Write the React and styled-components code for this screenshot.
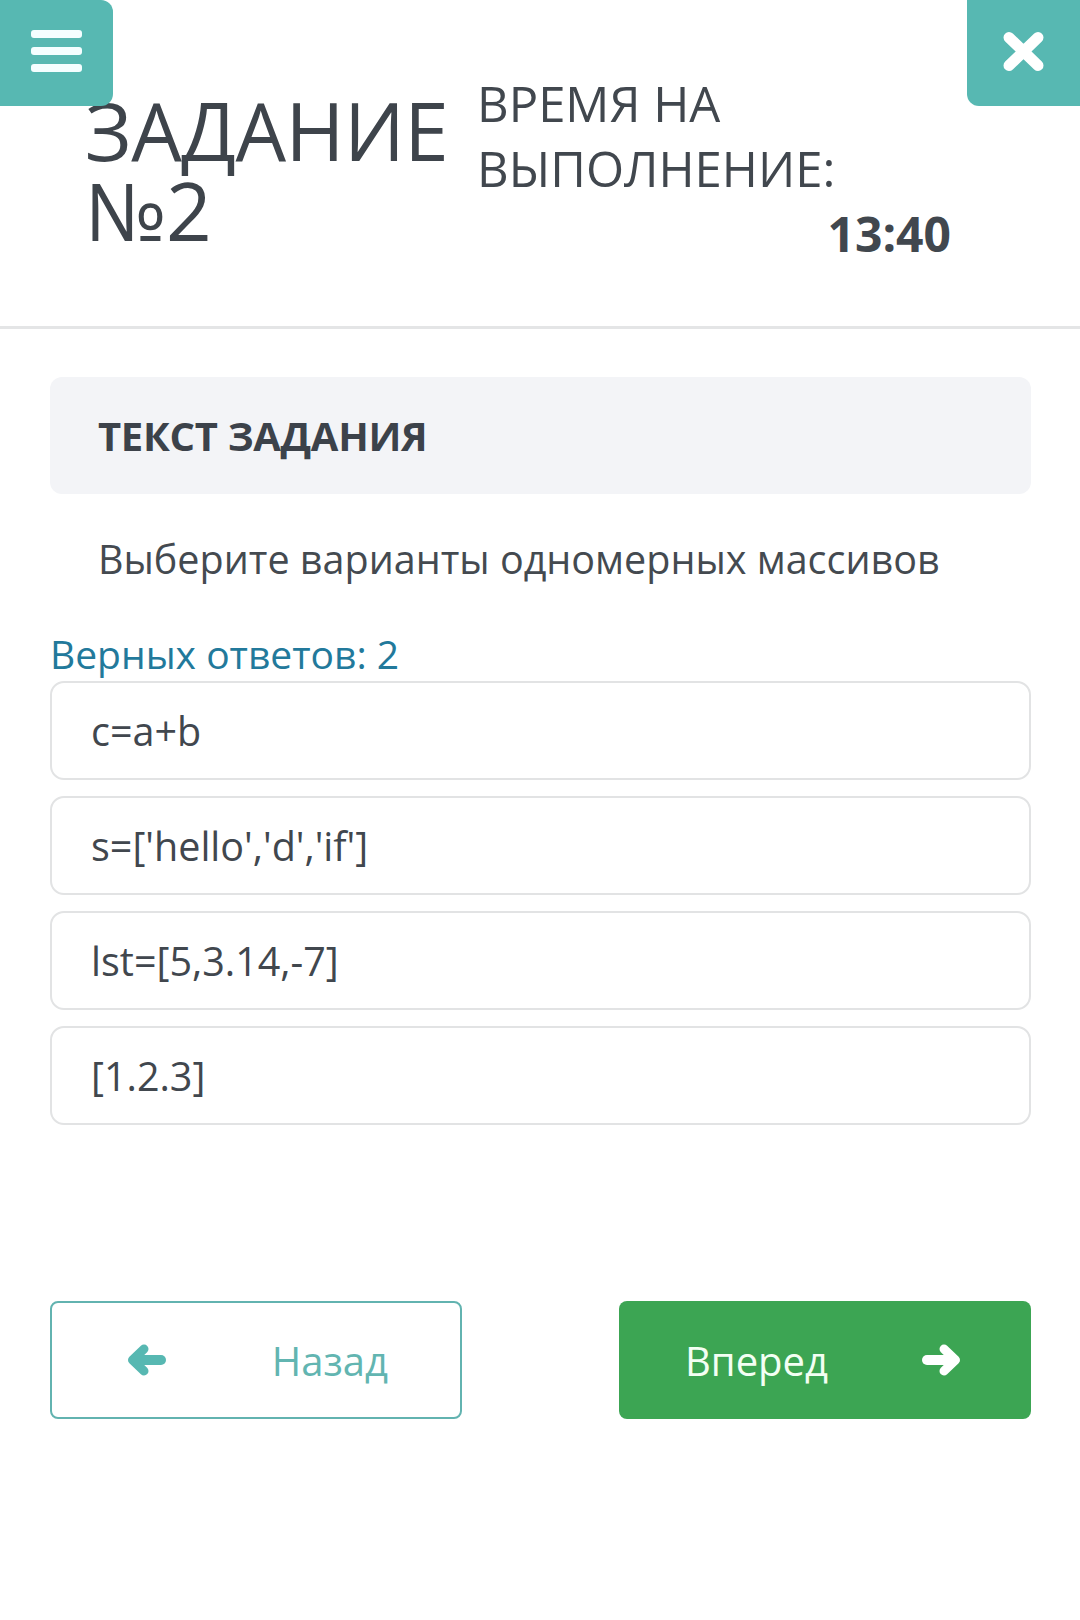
import React from "react";
import styled, { createGlobalStyle } from "styled-components";

const GlobalStyle = createGlobalStyle`
  html, body {
    margin: 0;
    padding: 0;
    background: #ffffff;
    font-family: "Open Sans", "Noto Sans", sans-serif;
  }
  * { box-sizing: border-box; }
`;

const TEAL = "#57b8b2";

const Page = styled.div`
  position: relative;
  width: 1080px;
  min-height: 1620px;
  background: #fff;
  color: #41474e;
`;

const CornerButton = styled.div`
  position: absolute;
  top: 0;
  ${(p) => (p.$side === "left" ? "left: 0;" : "right: 0;")}
  width: 113px;
  height: 106px;
  background: ${TEAL};
  border-radius: ${(p) => (p.$side === "left" ? "0 12px 12px 0" : "0 0 0 12px")};
  display: flex;
  align-items: center;
  justify-content: center;
  z-index: 2;
`;

const Bars = styled.div`
  display: flex;
  flex-direction: column;
  gap: 9px;
  margin-top: -5px;
  margin-left: 0;
`;

const Bar = styled.span`
  display: block;
  width: 51px;
  height: 8px;
  border-radius: 3px;
  background: #f4feff;
`;

const Header = styled.header`
  display: flex;
  align-items: flex-start;
  height: 329px;
  padding: 71px 0 0 85px;
  border-bottom: 3px solid #e4e5e6;
`;

const Title = styled.h1`
  margin: 19px 0 0;
  width: 392px;
  font-size: 80px;
  line-height: 80px;
  font-weight: 400;
  color: #3e444b;
  letter-spacing: -0.5px;
`;

const Timer = styled.div`
  width: 474px;
  font-size: 49px;
  line-height: 65px;
  color: #41474e;
`;

const TimerLine = styled.div`
  text-align: ${(p) => (p.$right ? "right" : "left")};
  font-weight: ${(p) => (p.$bold ? 700 : 400)};
  font-size: ${(p) => (p.$bold ? "48px" : "49px")};
`;

const Main = styled.main`
  padding: 48px 49px 0 50px;
`;

const TaskHeading = styled.div`
  height: 117px;
  background: #f3f4f7;
  border-radius: 12px;
  display: flex;
  align-items: center;
  padding-left: 48px;
  font-size: 40px;
  font-weight: 700;
  color: #3c424a;
  letter-spacing: -0.3px;
`;

const Question = styled.p`
  margin: 38px 0 0;
  padding-left: 48px;
  font-size: 39.5px;
  line-height: 54px;
  color: #444a50;
`;

const CorrectCount = styled.div`
  margin-top: 41px;
  font-size: 39px;
  line-height: 54px;
  color: #22799b;
`;

const AnswerList = styled.div`
  margin-top: 0;
  display: flex;
  flex-direction: column;
  gap: 16px;
`;

const Answer = styled.div`
  height: 99px;
  border: 2px solid #e2e3e4;
  border-radius: 14px;
  display: flex;
  align-items: center;
  padding-left: 39px;
  font-size: 39.5px;
  color: #41474e;
`;

const ButtonRow = styled.div`
  margin-top: 176px;
  display: flex;
  justify-content: space-between;
`;

const NavButton = styled.div`
  width: 412px;
  height: 118px;
  border-radius: 8px;
  display: flex;
  align-items: center;
  justify-content: space-between;
  padding: ${(p) => (p.$primary ? "0 70px 0 66px" : "0 72px 0 75px")};
  font-size: 40px;
  ${(p) =>
    p.$primary
      ? `background: #3ca553; color: #f3fff3; border: none;`
      : `background: #fff; color: #62b5b1; border: 2px solid #62b3b0;`}
`;

const Arrow = ({ dir, color }) => (
  <svg
    width="39"
    height="32"
    viewBox="0 0 39 32"
    style={{ transform: dir === "right" ? "scaleX(-1)" : "none", flexShrink: 0 }}
  >
    <path
      d="M17 5 L5.5 16 L17 27"
      fill="none"
      stroke={color}
      strokeWidth="9"
      strokeLinecap="round"
      strokeLinejoin="round"
    />
    <path d="M9 16 H34" stroke={color} strokeWidth="10" strokeLinecap="round" />
  </svg>
);

const CloseIcon = () => (
  <svg width="43" height="41" viewBox="0 0 43 41" style={{ marginTop: -3 }}>
    <path
      d="M7 6.5 L36 34.5 M36 6.5 L7 34.5"
      stroke="#ffffff"
      strokeWidth="11"
      strokeLinecap="round"
    />
  </svg>
);

const answers = ["c=a+b", "s=['hello','d','if']", "lst=[5,3.14,-7]", "[1.2.3]"];

export default function App() {
  return (
    <>
      <GlobalStyle />
      <Page>
        <CornerButton $side="left">
          <Bars>
            <Bar />
            <Bar />
            <Bar />
          </Bars>
        </CornerButton>
        <CornerButton $side="right">
          <CloseIcon />
        </CornerButton>

        <Header>
          <Title>
            ЗАДАНИЕ
            <br />
            №2
          </Title>
          <Timer>
            <TimerLine>ВРЕМЯ НА</TimerLine>
            <TimerLine>ВЫПОЛНЕНИЕ:</TimerLine>
            <TimerLine $right $bold>13:40</TimerLine>
          </Timer>
        </Header>

        <Main>
          <TaskHeading>ТЕКСТ ЗАДАНИЯ</TaskHeading>
          <Question>Выберите варианты одномерных массивов</Question>
          <CorrectCount>Верных ответов: 2</CorrectCount>
          <AnswerList>
            {answers.map((a) => (
              <Answer key={a}>{a}</Answer>
            ))}
          </AnswerList>
          <ButtonRow>
            <NavButton>
              <Arrow dir="left" color="#57b8b2" />
              <span>Назад</span>
            </NavButton>
            <NavButton $primary>
              <span>Вперед</span>
              <Arrow dir="right" color="#ffffff" />
            </NavButton>
          </ButtonRow>
        </Main>
      </Page>
    </>
  );
}
